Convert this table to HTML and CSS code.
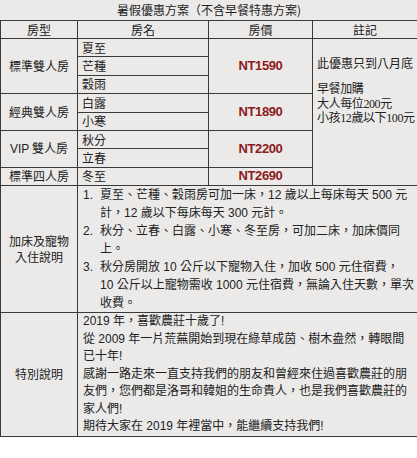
FILE: index.html
```html
<!DOCTYPE html>
<html lang="zh-Hant">
<head>
<meta charset="utf-8">
<title>暑假優惠方案</title>
<link rel="stylesheet" href="styles.css">
</head>
<body>
<table class="plan">
  <caption class="plan-title">暑假優惠方案（不含早餐特惠方案)</caption>
  <colgroup>
    <col class="col-type"><col class="col-name"><col class="col-price"><col class="col-note">
  </colgroup>
  <thead>
    <tr class="head"><th>房型</th><th>房名</th><th>房價</th><th>註記</th></tr>
  </thead>
  <tbody>
    <tr class="row">
      <td rowspan="3" class="type">標準雙人房</td>
      <td class="name">夏至</td>
      <td rowspan="3" class="price">NT1590</td>
      <td rowspan="8" class="note">
        <p class="note-main">此優惠只到八月底</p>
        <p class="note-sub">早餐加購<br>大人每位200元<br>小孩12歲以下100元</p>
      </td>
    </tr>
    <tr class="row"><td class="name">芒種</td></tr>
    <tr class="row"><td class="name">穀雨</td></tr>
    <tr class="row">
      <td rowspan="2" class="type">經典雙人房</td>
      <td class="name">白露</td>
      <td rowspan="2" class="price">NT1890</td>
    </tr>
    <tr class="row"><td class="name">小寒</td></tr>
    <tr class="row">
      <td rowspan="2" class="type"><span class="latin">VIP</span> 雙人房</td>
      <td class="name">秋分</td>
      <td rowspan="2" class="price">NT2200</td>
    </tr>
    <tr class="row"><td class="name">立春</td></tr>
    <tr class="row">
      <td class="type">標準四人房</td>
      <td class="name">冬至</td>
      <td class="price">NT2690</td>
    </tr>
    <tr class="info info-bed">
      <td class="type">加床及寵物<br>入住說明</td>
      <td colspan="3" class="desc desc-bed">
        <div class="item"><span class="num">1.</span><span class="txt">夏至、芒種、穀雨房可加一床，12 歲以上每床每天 500 元<br>計，12 歲以下每床每天 300 元計。</span></div>
        <div class="item"><span class="num">2.</span><span class="txt">秋分、立春、白露、小寒、冬至房，可加二床，加床價同<br>上。</span></div>
        <div class="item"><span class="num">3.</span><span class="txt">秋分房開放 10 公斤以下寵物入住，加收 500 元住宿費，<br>10 公斤以上寵物需收 1000 元住宿費，無論入住天數，單次<br>收費。</span></div>
      </td>
    </tr>
    <tr class="info info-special">
      <td class="type">特別說明</td>
      <td colspan="3" class="desc desc-special">
        2019 年，喜歡農莊十歲了!<br>
        從 2009 年一片荒蕪開始到現在綠草成茵、樹木盎然，轉眼間已十年!<br>
        感謝一路走來一直支持我們的朋友和曾經來住過喜歡農莊的朋友們，您們都是洛哥和韓姐的生命貴人，也是我們喜歡農莊的家人們!<br>
        期待大家在 2019 年裡當中，能繼續支持我們!
      </td>
    </tr>
  </tbody>
</table>
</body>
</html>
```

FILE: styles.css
```css
html, body {
  margin: 0;
  padding: 0;
  background: #ffffff;
}

body {
  font-family: "Noto Sans CJK TC", sans-serif;
  font-size: 12px;
  color: #222222;
}

.plan {
  width: 417px;
  border-collapse: collapse;
  table-layout: fixed;
  background: #ebeae9;
}

.plan-title {
  background: #ebeae9;
  height: 20px;
  line-height: 20px;
  font-size: 12px;
  text-align: center;
}

.col-type { width: 77px; }
.col-name { width: 131px; }
.col-price { width: 104px; }
.col-note { width: 105px; }

.plan th,
.plan td {
  border: 1px solid #3a3a3a;
  padding: 0;
  line-height: 16px;
}

.head th {
  height: 17px;
  font-weight: normal;
  text-align: center;
}

.row td {
  height: 17.4px;
}

.type {
  text-align: center;
  vertical-align: middle;
}

.latin {
  font-family: "Liberation Sans", sans-serif;
}

.plan .name {
  text-align: left;
  padding-left: 4px;
}

.price {
  text-align: center;
  vertical-align: middle;
  font-family: "Liberation Sans", sans-serif;
  font-weight: bold;
  font-size: 13px;
  letter-spacing: -0.4px;
  color: #8c1b1b;
}

.plan .note {
  vertical-align: top;
  padding: 17px 0 0 4px;
  font-family: "Liberation Serif", "Noto Sans CJK TC", serif;
  white-space: nowrap;
}

.note p {
  margin: 0;
}

.note-main {
  line-height: 16px;
}

.note .note-sub {
  margin-top: 10px;
  line-height: 14.5px;
  letter-spacing: -0.4px;
}

.info-bed td {
  height: 126px;
}

.info-special td {
  height: 122px;
}

.plan .desc {
  padding: 0 6px 0 5px;
  font-family: "Liberation Sans", "Noto Sans CJK TC", sans-serif;
  vertical-align: middle;
}

.plan .desc-bed {
  line-height: 18px;
  padding-right: 0;
  white-space: nowrap;
}

.plan .desc-special {
  line-height: 17.5px;
}

.item {
  display: flex;
}

.num {
  flex: 0 0 17px;
}

.txt {
  flex: 1;
}
```
